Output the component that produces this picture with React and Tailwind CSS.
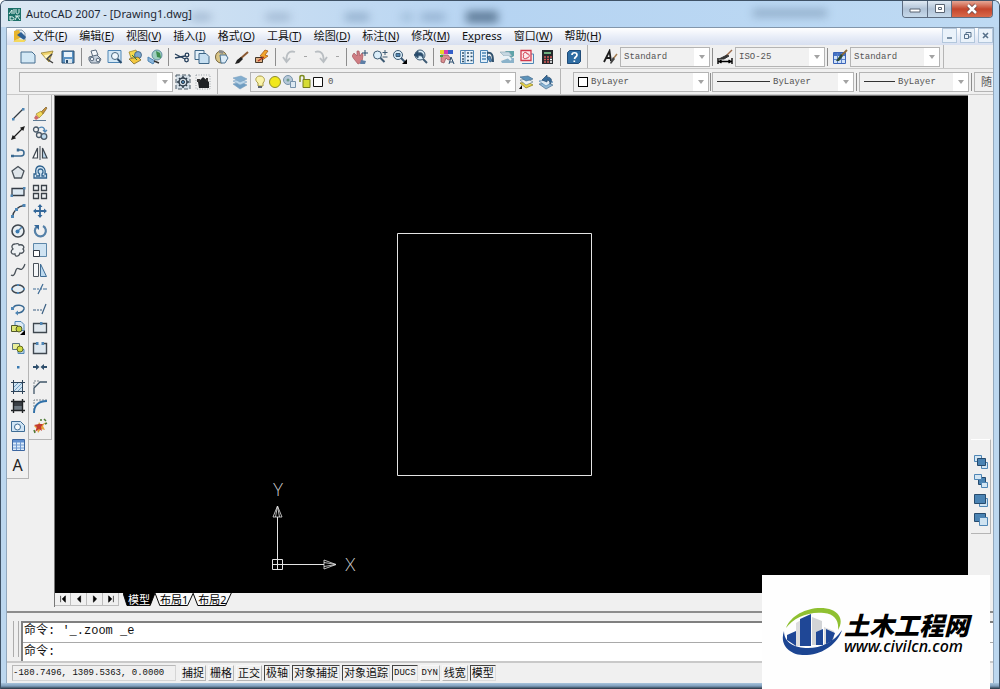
import { useState } from 'react';

const N = '#274b6d';
const B = '#4f86b5';
const L = '#bcd9ee';
const K = '#1d1d1d';

// 16x16 toolbar glyphs
const glyphs = {
    new: <path d="M1 3h11l3 3v8H1z" fill="#d3e8f5" stroke="#476f90" />,
    open: (
        <g>
            <path d="M1 4l12-2-4 11z" fill="#f1d36b" stroke="#8a7420" strokeWidth=".7" />
            <path d="M4 6l8-1-5 6z" fill="#fff6bf" />
            <path d="M12 5l-5 5 6 4" fill="none" stroke="#444" strokeWidth="1.500" />
        </g>
    ),
    save: (
        <g>
            <path d="M2 2h12v12H2z" fill="#5b93c4" stroke={N} />
            <path d="M4 3h8v5H4z" fill="#e8f3fb" />
            <path d="M5 10h7v4H5z" fill="#d9e6ef" />
            <path d="M6 11h2v3H6z" fill={N} />
        </g>
    ),
    print: (
        <g stroke="#5a6a7c">
            <path d="M4 2l5-1 2 5-5 2z" fill="#f5f8fb" />
            <path d="M2 8l8-2 4 4-2 4-8 0-2-3z" fill="#c9d3de" />
            <circle cx="5" cy="10" r="1.8" fill="#eef2f7" />
            <circle cx="11" cy="11" r="1.8" fill="#eef2f7" />
        </g>
    ),
    preview: (
        <g>
            <path d="M1 1.500h13v12H1z" fill="#d4e8f6" stroke={B} />
            <circle cx="8" cy="7" r="3.5" fill="#eef7fd" stroke="#47677f" />
            <path d="M10.500 10l4 4" stroke={N} strokeWidth="2" />
        </g>
    ),
    publish: (
        <g>
            <path d="M2 3l7-2 2 5-7 3z" fill="#f4d84e" stroke="#9c7c1a" strokeWidth=".7" />
            <circle cx="11" cy="6" r="3.500" fill="#7ba6cc" stroke={N} strokeWidth=".7" />
            <path d="M2 10l9-2 3 3-7 4z" fill="#f3c73f" stroke="#6b5a1e" strokeWidth=".7" />
            <path d="M5 6l5 5" stroke="#2f7c3c" />
        </g>
    ),
    globe: (
        <g>
            <circle cx="10" cy="6" r="5" fill="#9fcfc0" stroke="#3a6b8c" strokeWidth=".7" />
            <path d="M9 2l4 2 1 5-4-1z" fill="#3c8c4c" />
            <path d="M1 8l7 4-2 3-5-3z" fill="#8cb7dc" stroke={B} />
            <path d="M7 12l5 2" stroke="#333" strokeWidth="1.500" />
        </g>
    ),
    cut: (
        <g fill="none" stroke="#27405c" strokeWidth="1.300">
            <path d="M1 5l10 5M1 9l10-2" />
            <circle cx="13" cy="6" r="1.800" />
            <circle cx="12.500" cy="11" r="1.800" />
        </g>
    ),
    copy: (
        <g fill="#e3f0f9" stroke="#3f6787">
            <path d="M1 1.500h9v9H1z" />
            <path d="M5 4.500h7l3 3v7H5z" fill="#c6dff1" />
        </g>
    ),
    paste: (
        <g>
            <ellipse cx="7" cy="8" rx="5.500" ry="6" fill="#d9c587" stroke="#76653a" />
            <path d="M5 1l5 1-1 3-4-1z" fill="#8c8c8c" />
            <path d="M6 6h6l2 3-3 5H7z" fill="#dcecf8" stroke="#476f90" />
        </g>
    ),
    brush: (
        <g>
            <path d="M14 3l-8 7" stroke="#8b5a33" strokeWidth="2" />
            <path d="M7 8l2 2-4 4-4 1 2-4z" fill="#222" />
        </g>
    ),
    bolt: (
        <g>
            <path d="M11 1l3 1-3 4 3 1-7 5 2-4-3-1z" fill="#f3a62c" stroke="#a65a18" strokeWidth=".8" />
            <path d="M1.500 8.500h7v5h-7z" fill="#e0b083" stroke="#433629" />
            <path d="M4 12l6-4" stroke="#b03020" strokeWidth="1.300" />
        </g>
    ),
    undo: <path d="M14 3C8 1 5 5 5.500 12M2 8l3.500 5L9 9" fill="none" stroke="#b9bec2" strokeWidth="1.800" />,
    redo: <path d="M2 3c6-2 9 2 8.500 9M7 9l3.500 4L14 8" fill="none" stroke="#b9bec2" strokeWidth="1.800" />,
    pan: (
        <g>
            <path d="M2 4l3 3 0-5 2 0 1 5 2-3 1 2-1 7-4 2-4-5-2-3z" fill="#cf7d83" stroke="#a3575e" strokeWidth=".7" />
            <path d="M13 1v6M10 4h6" stroke={N} />
            <path d="M9 11l5 1-1 3-5 0z" fill="#5d7fa6" />
        </g>
    ),
    zoomrt: (
        <g fill="none" stroke="#3c5a73">
            <circle cx="5.500" cy="6" r="4" fill="#dbeefa" />
            <path d="M8.500 9l4 4" strokeWidth="2" />
            <path d="M13 1v5M10.500 3.500h5M10.500 8h5" />
        </g>
    ),
    zoomwin: (
        <g fill="none" stroke="#3c5a73">
            <circle cx="6" cy="6" r="4.500" fill="#dbeefa" />
            <path d="M4 4.500h4v3H4z" fill={B} />
            <path d="M9 9l4 4" strokeWidth="2" />
            <path d="M15 10v5h-5z" fill="#000" stroke="none" />
        </g>
    ),
    zoomprev: (
        <g fill="none" stroke="#3c5a73">
            <circle cx="8" cy="6" r="5" fill="#dbeefa" />
            <path d="M11 10l4 4" strokeWidth="2" />
            <path d="M2 6l4-4v2c4-1 6 1 5 5-1-2-2-3-5-2v2z" fill={N} />
        </g>
    ),
    props: (
        <g>
            <path d="M1 1h4v4H1z" fill="#e8d52d" />
            <path d="M5 1h4v4H5z" fill="#d33ab0" />
            <path d="M9 1h5v4H9z" fill="#3560c9" />
            <path d="M2 6l7 0 3 4-3 1-2-2-2 5-3-1z" fill="#d98f8f" stroke="#8c4a55" strokeWidth=".7" />
            <path d="M10 15l2-7 3 7m-4-2h3" fill="none" stroke={N} />
            <path d="M1 6h3v2H1z" fill="#39a04b" />
        </g>
    ),
    dcenter: (
        <g>
            <path d="M1.500 1.500h13v13h-13z" fill="#eaf4fb" stroke={B} />
            <path d="M6 2v12" stroke={B} />
            <path d="M3 4h2M3 7h2M3 10h2M3 12.500h2M8 4h2M11.500 4h2M8 7.500h2M11.500 7.500h2M8 11.500h2M11.500 11.500h2" stroke="#33536e" strokeWidth="1.700" />
        </g>
    ),
    palettes: (
        <g>
            <path d="M1.500 1.500h7v12h-7z" fill="#e3f0fa" stroke={B} />
            <path d="M3 4h4M3 7h4M3 10h4" stroke={B} strokeWidth="1.500" />
            <path d="M8 4c5-1 6 2 6 9" fill="none" stroke="#33536e" strokeWidth="2" />
            <path d="M8 8l3 5 2-1-2-5z" fill={B} stroke={N} strokeWidth=".7" />
        </g>
    ),
    sheets: (
        <g>
            <path d="M6 2h9v5l-3 2z" fill="#5fa3a8" />
            <path d="M1 3h9l3 4H5z" fill="#c6d8e2" stroke="#8aa4b4" strokeWidth=".6" />
            <path d="M2 12l8-3h5v5H3z" fill="#8cb3ca" />
            <path d="M1 8h8l3 3" fill="none" stroke="#e9f2f7" strokeWidth="2" />
        </g>
    ),
    markup: (
        <g fill="none">
            <path d="M5 5h9.500v9.500H3" stroke={B} />
            <path d="M2 1.500h10v10H2z" fill="#fbe9eb" stroke="#d2384b" strokeWidth="1.300" />
            <path d="M5 4c1-1 3-1 3 1 3-1 3 4 0 4-3 2-5-1-3-2-1-1-1-2 0-3z" stroke="#d2384b" />
        </g>
    ),
    calc: (
        <g>
            <path d="M3 1h11v14H3z" fill="#26292c" />
            <path d="M5 3h7v2H5z" fill="#6fae7d" />
            <path d="M5 8h2M8 8h2M11 8h2M5 10.500h2M8 10.500h2M5 13h2M8 13h2" stroke="#d85a58" strokeWidth="1.400" />
            <path d="M11 10.500h2M11 13h2" stroke="#fff" strokeWidth="1.400" />
        </g>
    ),
    help: (
        <g>
            <path d="M1.500 3.500l2-2h11v11l-2 2h-11z" fill="#2f6da3" stroke="#1f4b78" />
            <path d="M6 6c0-3 5-3 5 0 0 2-2 1.500-2.500 4M8.300 11.500v1.500" fill="none" stroke="#fff" strokeWidth="1.700" />
        </g>
    ),
    textstyle: (
        <g>
            <path d="M2 13L7.500 2 9 12M4 9h5" fill="none" stroke={K} strokeWidth="1.800" />
            <path d="M15 5l-4 5" stroke="#a37a4e" strokeWidth="1.500" />
            <path d="M11 8l2 2-4 5-1-1z" fill="#444" />
        </g>
    ),
    dimstyle: (
        <g>
            <path d="M15 1L9 7" stroke="#9b6a4a" strokeWidth="1.500" />
            <path d="M10 6l2 1-5 3-5 0z" fill="#333" stroke="#333" />
            <path d="M1 9v6M15 9v6M2 12.500h12M4.500 11L2 12.500 4.500 14M11.500 11l2.500 1.500-2.500 1.500" fill="none" stroke="#000" strokeWidth="1.400" />
        </g>
    ),
    tablestyle: (
        <g>
            <path d="M1.500 3.500h12v11h-12z" fill="#cfe1f8" stroke="#3b64b8" />
            <path d="M2 4h11v3H2z" fill="#4673c4" />
            <path d="M2 10.500h11M5.500 4v10M9.500 4v10" stroke="#5c83c9" />
            <path d="M15 1l-6 6" stroke="#8a6a3a" strokeWidth="1.800" />
            <path d="M9 5l2 2-4 5-3 0z" fill="#2d4a35" />
        </g>
    ),
    gear: (
        <g>
            <path d="M1 1h14v14H1z" fill="#d4dee6" stroke="#4b5a66" strokeDasharray="4 2" />
            <circle cx="8" cy="8" r="4" fill="none" stroke="#2f3e4b" strokeWidth="1.500" />
            <circle cx="8" cy="8" r="1.600" fill="#4f86b5" stroke="#2f3e4b" />
            <path d="M8 2v2M8 12v2M2 8h2M12 8h2M4 4l1 1M11 11l1 1M12 4l-1 1M4 12l1-1" stroke="#2f3e4b" strokeWidth="1.500" />
        </g>
    ),
    workspace: (
        <g>
            <path d="M1 1h14v14H1z" fill="none" stroke="#9aa2a8" strokeDasharray="1 1.500" />
            <path d="M3 8l5-5 6 5v6H4z" fill="#1e2124" />
            <path d="M2 5h3v3H2zM11 4h2v3h-2z" fill="#333" />
        </g>
    ),
    layers: (
        <g stroke="#7ba0c0" strokeWidth=".6">
            <path d="M1 10l8-2 6 3-7 4z" fill="#6f9dc2" />
            <path d="M1 7l8-2 6 3-7 3z" fill="#b9d5e9" />
            <path d="M1 4l8-2 6 3-7 3z" fill="#83aecf" />
        </g>
    ),
    layerprev: (
        <g strokeWidth=".7">
            <path d="M2 9l8-1 5 3-7 3z" fill="#e6d244" stroke="#85781c" />
            <path d="M2 6l8-1 5 3-7 3z" fill="#eff3f4" stroke="#6f8797" />
            <path d="M2 3l8-1 5 3-7 2z" fill="#5d93ba" stroke="#476f90" />
            <path d="M1 15l3-4v4z" fill="#000" />
        </g>
    ),
    layerback: (
        <g strokeWidth=".7">
            <path d="M1 10l8-1 6 2-7 4z" fill="#8fb7d4" stroke="#476f90" />
            <path d="M1 7l8-1 6 2-7 4z" fill="#dfeaf2" stroke={B} />
            <path d="M4 6l5-5v2c4 0 6 3 3 7 0-3-1-4-3-4v2z" fill="#376d9c" stroke={N} />
        </g>
    ),
    line: (
        <g>
            <path d="M3 13L13 3" stroke="#333b44" strokeWidth="1.200" />
            <path d="M2 12h2.500v2.500H2zM12 2h2.500v2.500H12z" fill={B} />
        </g>
    ),
    xline: <path d="M2 14L14 2M2 14l1-3 2 2zM14 2l-3 1 2 2z" fill={K} stroke={K} strokeWidth="1.200" />,
    pline: (
        <g fill="none" stroke="#396890" strokeWidth="1.500">
            <path d="M9 5h2c4 0 4 6 0 6H2" />
            <path d="M8 3.500v3M1 11h3" strokeWidth="2.500" />
        </g>
    ),
    polygon: <path d="M8 2.500l6 4.500-2.500 7h-7L2 7z" fill="#dfe5ea" stroke="#4a525a" strokeWidth="1.300" />,
    rect: (
        <g>
            <path d="M2 4.500h12v7H2z" fill="#dde9f2" stroke="#333b44" strokeWidth="1.300" />
            <path d="M13 3h2.500v2.500H13zM.5 10.500H3V13H.5z" fill={B} />
        </g>
    ),
    arc: (
        <g>
            <path d="M2.500 14C3 8 8 3 14 2.500" fill="none" stroke="#333b44" strokeWidth="1.300" />
            <path d="M1 12h3v3H1zM12.500 1h3v3h-3zM5 5h3v3H5z" fill={B} />
        </g>
    ),
    circle: (
        <g>
            <circle cx="8" cy="8" r="6" fill="#e9eff3" stroke="#3f474f" strokeWidth="1.600" />
            <path d="M8 8l4-4" stroke={B} strokeWidth="1.500" />
            <circle cx="7.500" cy="8.500" r="2" fill="#3879b0" />
        </g>
    ),
    cloud: <path d="M5 2c3-1 4 0 4 1 4-1 6 2 4 4 2 2 0 5-3 4-1 4-5 4-5 1-4 1-5-3-2-5-2-2-1-5 2-5z" fill="#eef1f3" stroke="#4a525a" strokeWidth="1.300" />,
    spline: <path d="M1 13c3 2 4-2 5-5 2-4 4 1 6-1 2-1 2-3 3-5" fill="none" stroke="#4a525a" strokeWidth="1.300" />,
    ellipse: (
        <g>
            <ellipse cx="8" cy="8" rx="6" ry="4" fill="#e5edf2" stroke="#3f474f" strokeWidth="1.500" />
            <path d="M7 3h2v2H7zM7 11h2v2H7zM1 7h2v2H1zM13 7h2v2h-2z" fill={B} />
        </g>
    ),
    ellarc: (
        <g>
            <path d="M3 8c1-6 12-4 11 0-1 3-4 4-7 4" fill="none" stroke="#3a6992" strokeWidth="1.500" />
            <path d="M1 6h3v3H1zM8 9.500v5L5 12z" fill={B} />
        </g>
    ),
    insert: (
        <g>
            <path d="M5 1.500h6l3 3v6H5z" fill="#dceaf4" stroke={B} />
            <path d="M1.500 5.500h6v6h-6z" fill="#dfe878" stroke="#50582a" />
            <circle cx="9" cy="9" r="3" fill="#c5d43d" stroke="#50582a" />
            <path d="M15 10v5h-5z" fill="#000" />
        </g>
    ),
    block: (
        <g>
            <path d="M2.500 3.500h7v6h-7z" fill="#e9ee9a" stroke="#5c7481" />
            <path d="M8 9.500h6v4H8z" fill="#b9d3e6" stroke={B} />
            <circle cx="10" cy="9" r="3" fill="#d2dd45" stroke="#626a1e" />
        </g>
    ),
    point: <path d="M7 7h2.500v2.500H7z" fill="#3879b0" />,
    hatch: (
        <g fill="none">
            <path d="M3 3h10v10H3z" fill="#cfe3f2" />
            <path d="M3 9l6-6M3 13L13 3M7 13l6-6" stroke="#6e9cc0" />
            <path d="M3.500 1v14M12.500 1v14M1 3.500h14M1 12.500h14" stroke="#2d4358" />
        </g>
    ),
    gradient: (
        <g>
            <path d="M4 4h8v8H4z" fill="#6c7780" />
            <path d="M4 4h8v4H4z" fill="#3a3f45" />
            <path d="M3.500 1v14M12.500 1v14M1 3.500h14M1 12.500h14" stroke="#1f2225" strokeWidth="1.400" />
        </g>
    ),
    region: (
        <g>
            <path d="M1.500 3.500h9l4 4v6h-13z" fill="#d0e4f4" stroke="#3e6c95" />
            <circle cx="7.500" cy="9" r="3" fill="#f4f9fc" stroke="#3e6c95" />
        </g>
    ),
    table: (
        <g>
            <path d="M2.500 2.500h12v11h-12z" fill="#dcebfa" stroke="#3c66a0" />
            <path d="M3 3h11v2.500H3z" fill="#5f8fd0" />
            <path d="M3 8h11M3 11h11M6.500 5v8M10.500 5v8" stroke="#6d97cf" />
        </g>
    ),
    erase: (
        <g>
            <path d="M14 1L9 6l2 2 4-6z" fill="#c9953b" stroke="#6a4a1a" strokeWidth=".6" />
            <path d="M4 8l5-3 2 3-4 4z" fill="#f2d757" stroke="#8f7a20" strokeWidth=".6" />
            <path d="M4 9l3 3-3 2-2-2z" fill="#cc6a6a" />
            <path d="M1 14.500h13" stroke="#5c7a95" />
        </g>
    ),
    copyobj: (
        <g fill="none" stroke="#4a5a69" strokeWidth="1.300">
            <circle cx="4" cy="4.500" r="2.500" />
            <circle cx="7" cy="10" r="2.500" />
            <circle cx="12" cy="11.500" r="2.800" fill={L} />
            <path d="M7 3c4-2 6 0 6 4M11 5l2 2 2-2" stroke={B} />
        </g>
    ),
    mirror: (
        <g stroke="#3f474f">
            <path d="M5.500 3v10H1z" fill="#fff" strokeWidth="1.200" />
            <path d="M10.500 3v10H15z" fill={L} strokeWidth="1.200" />
            <path d="M8 1v14" />
        </g>
    ),
    offset: (
        <g fill="none" stroke="#2f628e" strokeWidth="1.300">
            <path d="M2 14h12.500v-4H13c1-4-1-8-5-8S3 6 4 10H2z" fill="#d5e6f2" />
            <path d="M4 12h3.500v-2C5 8 6 5 8.500 5S12 8 10 10v2h2.500" />
        </g>
    ),
    array: <path d="M1.500 1.500h5v5h-5zM9.500 1.500h5v5h-5zM1.500 9.500h5v5h-5zM9.500 9.500h5v5h-5z" fill="#edf0f2" stroke="#3a4148" strokeWidth="1.300" />,
    move: (
        <g fill="#34689a" stroke="#34689a">
            <path d="M8 3v10M3 8h10" strokeWidth="1.800" />
            <path d="M8 1l2.500 3h-5zM8 15l2.500-3h-5zM1 8l3-2.500v5zM15 8l-3-2.500v5z" stroke="none" />
        </g>
    ),
    rotate: (
        <g>
            <path d="M5 3.500a5.500 5.500 0 1 0 6-.5" fill="none" stroke="#5581a8" strokeWidth="2.200" />
            <path d="M2 2h5v5z" fill="#34689a" />
        </g>
    ),
    scale: (
        <g>
            <path d="M1.500 1.500h13v13h-13z" fill="#cfe3f2" stroke="#5d87a9" />
            <path d="M1.500 8.500h6v6h-6z" fill="#fff" stroke="#333b44" />
        </g>
    ),
    stretch: (
        <g>
            <path d="M1.500 1.500h5v13h-5z" fill="#f4f6f8" stroke="#4a525a" />
            <path d="M8.500 2l6 12.500h-6z" fill={L} stroke="#3e6c95" />
        </g>
    ),
    trim: <path d="M1 8h3M5 8h2M9 8h1M11 8h4M6 13l5-10" fill="none" stroke="#3e6c95" strokeWidth="1.200" />,
    extend: <path d="M1 9h3M5 9h2M8 9h2M10 13l4-10" fill="none" stroke="#3b5f82" strokeWidth="1.200" />,
    breakpt: (
        <g>
            <path d="M1.500 3.500h13v9h-13z" fill="#e1e8ee" stroke="#3f474f" strokeWidth="1.300" />
            <path d="M8 2h2.500v3H8z" fill={B} />
        </g>
    ),
    brk: (
        <g>
            <path d="M2 4h12v9H2z" fill="#dde7ef" />
            <path d="M5 3.500H1.500v10h13v-10H11" fill="none" stroke="#3f474f" strokeWidth="1.400" />
            <path d="M4 2h2.500v3H4zM9.500 2H12v3H9.500z" fill={B} />
        </g>
    ),
    join: <path d="M1 7h3V5l3.500 3L4 11V9H1zM15 7h-3V5L8.500 8l3.500 3V9h3z" fill="#2f4f6c" />,
    chamfer: (
        <g fill="none">
            <path d="M2 8V2h6" stroke="#7a848c" strokeDasharray="2 1" />
            <path d="M2 15V9l6-6h7" stroke="#3f5568" strokeWidth="1.300" />
        </g>
    ),
    fillet: (
        <g fill="none">
            <path d="M2 15V2h13" stroke="#7a848c" strokeDasharray="2 1" />
            <path d="M2 15C2 7 7 3 15 3" stroke="#2f70a8" strokeWidth="1.800" />
        </g>
    ),
    explode: (
        <g>
            <path d="M2 8l4-1 1-3 2 3 5-3-3 4 2 4-4-1-3 4-1-4z" fill="#e5a13a" />
            <path d="M2 7l3 2-2 5 4-3 3 2-1-4 2-3-4 0z" fill="#c23a30" />
            <path d="M12 1l2 2M13 6l2-1M9 1v2M2 12l1 3" stroke="#4d7a33" strokeWidth="1.500" />
        </g>
    ),
    front: (
        <g>
            <path d="M1.500 1.500h7v6h-7zM8.500 8.500h6v6h-6z" fill="#d4e6f3" stroke={B} />
            <path d="M4.500 4.500h8v7h-8z" fill="#4a83b3" stroke={N} />
        </g>
    ),
    back: (
        <g>
            <path d="M5.500 4.500h7v7h-7z" fill="#4a83b3" stroke={N} />
            <path d="M1.500 1.500h7v5h-7zM8.500 9.500h6v5h-6z" fill="#d4e6f3" stroke={B} />
        </g>
    ),
    above: (
        <g>
            <path d="M6.500 6.500h8v8h-8z" fill="#cfe3f1" stroke={B} />
            <path d="M1.500 2.500h11v9h-11z" fill="#4a83b3" stroke={N} />
        </g>
    ),
    below: (
        <g>
            <path d="M1.500 2.500h11v8h-11z" fill="#4a83b3" stroke={N} />
            <path d="M6.500 6.500h8v8h-8z" fill="#cfe3f1" stroke={B} />
        </g>
    ),
};

const standardGroups = [
    [['new', 'New'], ['open', 'Open'], ['save', 'Save']],
    [['print', 'Plot'], ['preview', 'Plot preview'], ['publish', 'Publish'], ['globe', '3D DWF']],
    [['cut', 'Cut'], ['copy', 'Copy'], ['paste', 'Paste'], ['brush', 'Match properties'], ['bolt', 'Block editor']],
    [['undo', 'Undo'], ['dash', 'Undo list'], ['redo', 'Redo'], ['dash', 'Redo list']],
    [['pan', 'Pan'], ['zoomrt', 'Zoom realtime'], ['zoomwin', 'Zoom window'], ['zoomprev', 'Zoom previous']],
    [['props', 'Properties'], ['dcenter', 'DesignCenter'], ['palettes', 'Tool palettes'], ['sheets', 'Sheet sets'], ['markup', 'Markup'], ['calc', 'Calculator']],
    [['help', 'Help']],
];

const drawTools = ['line', 'xline', 'pline', 'polygon', 'rect', 'arc', 'circle', 'cloud', 'spline', 'ellipse', 'ellarc', 'insert', 'block', 'point', 'hatch', 'gradient', 'region', 'table', 'text'];
const modifyTools = ['erase', 'copyobj', 'mirror', 'offset', 'array', 'move', 'rotate', 'scale', 'stretch', 'trim', 'extend', 'breakpt', 'brk', 'join', 'chamfer', 'fillet', 'explode'];
const orderTools = ['front', 'back', 'above', 'below'];

const menus = [
    ['文件', 'F'], ['编辑', 'E'], ['视图', 'V'], ['插入', 'I'], ['格式', 'O'], ['工具', 'T'],
    ['绘图', 'D'], ['标注', 'N'], ['修改', 'M'], ['Express', ''], ['窗口', 'W'], ['帮助', 'H'],
];

const statusModes = [
    ['捕捉', false], ['栅格', false], ['正交', false], ['极轴', true], ['对象捕捉', true],
    ['对象追踪', true], ['DUCS', true], ['DYN', false], ['线宽', false], ['模型', true],
];

function Glyph({ name }) {
    return (
        <svg className="w-4 h-4 shrink-0" viewBox="0 0 16 16" aria-hidden="true">
            {glyphs[name]}
        </svg>
    );
}

function Tool({ name, label }) {
    if (name === 'dash') {
        return (
            <button aria-label={label} className="w-3 h-5 flex items-center justify-center">
                <span className="w-[3px] h-px bg-[#a5a5a5]" />
            </button>
        );
    }
    return (
        <button aria-label={label || name} className="w-5 h-[19px] shrink-0 flex items-center justify-center">
            {name === 'text' ? <span className="text-base leading-4 text-[#222]">A</span> : <Glyph name={name} />}
        </button>
    );
}

function Separator() {
    return <span className="w-px h-[18px] mx-[3px] shrink-0 bg-[#8d8d8d]" />;
}

function Combo({ label, value, width, children }) {
    return (
        <div className={`${width} h-5 shrink-0 flex items-center relative border border-[#b4b4b4] bg-[#f1f1f1]`}>
            {children}
            <select
                aria-label={label}
                className="flex-1 min-w-0 h-full appearance-none bg-transparent outline-none pl-[3px] pr-4 pt-[2px] font-['Liberation_Mono','Noto_Sans_CJK_SC',monospace] text-[9px] text-[#555]"
            >
                <option>{value}</option>
            </select>
            <span className="absolute right-0 inset-y-0 w-[15px] bg-white flex items-center justify-center pointer-events-none">
                <svg className="w-[6px] h-[4px]" viewBox="0 0 6 4" aria-hidden="true"><path d="M0 0h6L3 4z" fill="#a3a3a3" /></svg>
            </span>
        </div>
    );
}

function TitleBar() {
    return (
        <header className="relative h-[26px] shrink-0 flex items-center pl-[7px] overflow-hidden bg-linear-to-r from-[#dbe7f2] via-[#b6d4f2] to-[#bedaf3]">
            {/* Shapes of the window behind, seen through the glass */}
            <div aria-hidden="true" className="absolute inset-0 blur-[4px]">
                <span className="absolute left-[190px] top-3 w-5 h-2 bg-[#8aa4bf]/60" />
                <span className="absolute left-[265px] top-3 w-6 h-2 bg-[#8aa4bf]/60" />
                <span className="absolute left-[344px] top-3 w-6 h-2 bg-[#7393b4]/60" />
                <span className="absolute left-[400px] top-3 w-3 h-2 bg-[#7b9aba]/40" />
                <span className="absolute left-[420px] top-3 w-6 h-2 bg-[#7b9aba]/60" />
                <span className="absolute left-[465px] top-[10px] w-8 h-3 bg-[#3f5b78]/70" />
                <span className="absolute left-[752px] top-2 w-[74px] h-2 bg-[#7693af]/60" />
            </div>
            <svg className="relative w-[13px] h-[13px]" viewBox="0 0 13 13" aria-hidden="true">
                <path d="M0 0h13v13H0z" fill="#1c7068" />
                <path d="M1 6l3-4v4m2-5v5m2-5v3c0 3 3 2 3 0V1M2 8v4h3c2-1 1-4-3-3M7 12l2-4 3 4M7 8h5" fill="none" stroke="#e2f4f0" />
            </svg>
            <h1 className="relative ml-[5px] text-[11px] text-[#1d2733]">AutoCAD 2007 - [Drawing1.dwg]</h1>
            <div className="absolute right-[6px] top-0 h-[17px] flex rounded-b border border-t-0 border-[#5d6c80] overflow-hidden">
                <button aria-label="Minimize" className="w-[25px] bg-linear-to-b from-[#dfe9f3] via-[#b1c3d7] to-[#c6d9ea] border-r border-[#5d6c80] flex items-center justify-center">
                    <svg className="w-3 h-3" viewBox="0 0 12 12"><path d="M1 6h10v3H1z" fill="#fff" stroke="#5a6573" /></svg>
                </button>
                <button aria-label="Maximize" className="w-6 bg-linear-to-b from-[#dfe9f3] via-[#b1c3d7] to-[#c6d9ea] border-r border-[#5d6c80] flex items-center justify-center">
                    <svg className="w-3 h-3" viewBox="0 0 12 12"><path d="M1.500 1.500h9v8h-9zM4.500 4.500h3v2h-3z" fill="#fff" stroke="#5a6573" /></svg>
                </button>
                <button aria-label="Close" className="w-10 bg-linear-to-b from-[#e5a796] via-[#c4452c] to-[#d9694a] flex items-center justify-center">
                    <svg className="w-3 h-3" viewBox="0 0 12 12">
                        <path d="M2 2l8 8M10 2l-8 8" stroke="#6b4444" strokeWidth="4" />
                        <path d="M2 2l8 8M10 2l-8 8" stroke="#fff" strokeWidth="2.500" />
                    </svg>
                </button>
            </div>
        </header>
    );
}

function MenuBar() {
    const docButton = 'w-[15px] h-[15px] border border-[#b3c7dc] bg-[#eaf2fa] flex items-center justify-center';
    return (
        <nav className="h-[18px] shrink-0 flex items-start justify-between border-t border-[#8296ab] bg-linear-to-b from-white via-[#e9eef8] to-[#d7dff0]">
            <div className="flex items-center">
                <svg className="w-[14px] h-[14px] ml-[6px] mr-[6px]" viewBox="0 0 14 14" aria-hidden="true">
                    <path d="M3 1h6l3 3v8H3z" fill="#dfeaf4" stroke="#8799aa" />
                    <path d="M1 2l5-1 3 7-8 4z" fill="#e8b52c" />
                    <path d="M4 6l4-3 5 5-2 3z" fill="#2d5f96" />
                    <path d="M0 13l4-3 9 1-2 2z" fill="#f5d95b" />
                </svg>
                <div className="flex gap-3">
                    {menus.map(([text, key]) => (
                        <button key={text} className="text-[11px] leading-[15px] text-[#111] whitespace-nowrap">
                            {key ? <>{text}(<u>{key}</u>)</> : <>E<u>x</u>press</>}
                        </button>
                    ))}
                </div>
            </div>
            <div className="flex gap-[3px]">
                <button aria-label="Minimize drawing" className={docButton}>
                    <svg className="w-[9px] h-[9px]" viewBox="0 0 9 9"><path d="M2 7h5" stroke="#56708a" strokeWidth="1.500" /></svg>
                </button>
                <button aria-label="Restore drawing" className={docButton}>
                    <svg className="w-[9px] h-[9px]" viewBox="0 0 9 9"><path d="M3 3V1.500h5V6H6M1.500 3.500h4v4h-4z" fill="none" stroke="#56708a" /></svg>
                </button>
                <button aria-label="Close drawing" className={docButton}>
                    <svg className="w-[9px] h-[9px]" viewBox="0 0 9 9"><path d="M2 2l5 5M7 2L2 7" stroke="#56708a" strokeWidth="1.600" /></svg>
                </button>
            </div>
        </nav>
    );
}

function Toolbars() {
    const bar = 'flex items-center shrink-0 border-r border-[#b5b5b5]';
    return (
        <div className="shrink-0 bg-[#f0f0f0] overflow-hidden">
            <div className="h-6 flex border-b border-[#c9c9c9]">
                <div className={`${bar} pl-[11px] pr-[3px]`}>
                    {standardGroups.map((group, i) => (
                        <div key={i} className="flex items-center">
                            {i > 0 && <Separator />}
                            {group.map(([name, label]) => <Tool key={label} name={name} label={label} />)}
                        </div>
                    ))}
                </div>
                <div className={`${bar} pl-3 pr-[3px]`}>
                    <Tool name="textstyle" label="Text style" />
                    <Combo label="Text style" value="Standard" width="w-[90px]" />
                    <span className="w-px h-[18px] mx-[2px] bg-[#8d8d8d]" />
                    <Tool name="dimstyle" label="Dimension style" />
                    <Combo label="Dimension style" value="ISO-25" width="w-[90px]" />
                    <span className="w-px h-[18px] mx-[2px] bg-[#8d8d8d]" />
                    <Tool name="tablestyle" label="Table style" />
                    <Combo label="Table style" value="Standard" width="w-[90px]" />
                </div>
            </div>
            <div className="h-[26px] flex border-b border-[#c9c9c9]">
                <div className={`${bar} pl-3 pr-1`}>
                    <Combo label="Workspace" value="" width="w-[154px]" />
                    <Tool name="gear" label="Workspace settings" />
                    <Tool name="workspace" label="My workspace" />
                </div>
                <div className={`${bar} pl-3 pr-1`}>
                    <Tool name="layers" label="Layer properties" />
                    <Combo label="Layer" value="0" width="w-[266px]">
                        <svg className="w-[72px] h-4 ml-[2px] shrink-0" viewBox="0 0 72 16" aria-hidden="true">
                            <path d="M5 9C1 6 3 2 7 2s6 4 3 7v3H5z" fill="#faf3a9" stroke="#a89a44" />
                            <path d="M5 13h4" stroke="#5b6570" strokeWidth="2" />
                            <circle cx="22" cy="8" r="5.500" fill="#f1e81d" stroke="#8c8b2f" />
                            <circle cx="35" cy="6" r="4.500" fill="#b6c8d8" stroke="#7793ab" />
                            <path d="M37.500 7.500h5v6h-5z" fill="#dce8f1" stroke="#7793ab" />
                            <circle cx="35" cy="6" r="1.500" fill="#6c9a8c" />
                            <path d="M47 8V3c0-2 4-2 4 0v5" fill="none" stroke="#7d8b1f" strokeWidth="1.500" />
                            <path d="M50 5.500h7v8h-7z" fill="#d5db35" stroke="#777d1c" />
                            <path d="M60.500 3.500h9v9h-9z" fill="#fff" stroke="#111" />
                        </svg>
                    </Combo>
                    <Tool name="layerprev" label="Make current" />
                    <Tool name="layerback" label="Layer previous" />
                </div>
                <div className="flex-1 min-w-0 flex items-center pl-3">
                    <Combo label="Color" value="ByLayer" width="w-[136px]">
                        <span className="w-[10px] h-[10px] ml-1 shrink-0 border border-black bg-white" />
                    </Combo>
                    <span className="w-px h-[18px] mx-px shrink-0 bg-[#8d8d8d]" />
                    <Combo label="Linetype" value="ByLayer" width="w-[142px]">
                        <span className="w-[53px] h-px ml-1 shrink-0 bg-[#333]" />
                    </Combo>
                    <span className="w-px h-[18px] mx-[2px] shrink-0 bg-[#8d8d8d]" />
                    <Combo label="Lineweight" value="ByLayer" width="w-[110px]">
                        <span className="w-[31px] h-px ml-1 shrink-0 bg-[#333]" />
                    </Combo>
                    <span className="w-px h-[18px] mx-[2px] shrink-0 bg-[#8d8d8d]" />
                    <div className="flex-1 min-w-0 h-5 overflow-hidden border border-r-0 border-[#b4b4b4] pl-[6px] text-[11px] leading-[18px] text-[#555]">随</div>
                </div>
            </div>
        </div>
    );
}

function Canvas() {
    return (
        <svg className="block w-full flex-1 min-h-0 bg-black" fill="none" stroke="#e4e4e4" role="img" aria-label="Model space">
            <path d="M342.500 137.500h194v242h-194z" />
            <path d="M217.500 463.500h10v10h-10zM222.500 421v52M217 468.500h52" />
            <path d="M222.500 410l-4.500 11h9zM222.500 410l-2 11M222.500 410l2 11" strokeWidth=".8" />
            <path d="M281 468.500l-12-4.500v9zM281 468.500l-12-2M281 468.500l-12 2" strokeWidth=".8" />
            <g fill="#d0d0d0" stroke="none" fontFamily="Lato, sans-serif" fontWeight="300" fontSize="17">
                <text x="218" y="400">Y</text>
                <text x="290" y="475">X</text>
            </g>
        </svg>
    );
}

function LayoutTabs() {
    const [tab, setTab] = useState('模型');
    const arrows = [
        ['First', 'M2 1v8M8 1v8L4 5z'],
        ['Previous', 'M7 1v8L3 5z'],
        ['Next', 'M3 1v8l4-4z'],
        ['Last', 'M2 1v8l4-4zM8 1v8'],
    ];
    return (
        <div className="h-[14px] shrink-0 flex items-start bg-[#f0f0f0]">
            {arrows.map(([label, d]) => (
                <button key={label} aria-label={label} className="w-4 h-[13px] border-r border-b border-[#bdbdbd] flex items-center justify-center">
                    <svg className="w-2 h-2" viewBox="0 0 10 10"><path d={d} fill="#000" stroke="#000" strokeWidth=".8" /></svg>
                </button>
            ))}
            <div className="flex ml-1">
                {['模型', '布局1', '布局2'].map((name) => (
                    <button
                        key={name}
                        onClick={() => setTab(name)}
                        className={`relative h-[13px] px-[5px] text-[11px] leading-[13px] ${tab === name ? 'text-white' : 'text-black'}`}
                    >
                        <svg className="absolute inset-0 w-full h-full" viewBox="0 0 40 13" preserveAspectRatio="none" aria-hidden="true">
                            <path d="M0 0l5 12.500h29L40 0" fill={tab === name ? '#000' : '#fafafa'} stroke="#000" />
                        </svg>
                        <span className="relative">{name}</span>
                    </button>
                ))}
            </div>
        </div>
    );
}

function CommandWindow() {
    return (
        <section className="shrink-0 pt-1 bg-[#f0f0f0]">
            <div className="h-[2px] bg-[#8d8d8d]" />
            <div className="flex pt-2 border-b-2 border-[#c9c9c9]">
                <div className="w-[6px] h-9 ml-[6px] mr-[2px] border-x border-[#adadad]" />
                <div className="flex-1 border-t-2 border-l-2 border-[#808080] bg-white font-['Liberation_Mono','Noto_Sans_CJK_SC',monospace] text-xs text-[#111]">
                    <p className="h-[19px] pl-px leading-4 whitespace-pre">命令: '_.zoom _e</p>
                    <label className="h-[19px] pl-px flex items-center border-t border-[#a9a9a9]">
                        命令:
                        <input className="flex-1 min-w-0 h-4 ml-2 outline-none" />
                    </label>
                </div>
            </div>
        </section>
    );
}

function StatusBar() {
    return (
        <footer className="h-[20px] shrink-0 flex items-center pl-[5px] bg-[#f0f0f0] text-[11px] text-[#111]">
            <output className="w-[164px] h-4 mr-1 border border-r-[#d5d5d5] border-b-[#d5d5d5] border-[#b8b8b8] font-['Liberation_Mono',monospace] text-[9px] leading-[15px] whitespace-nowrap">
                -180.7496, 1309.5363, 0.0000
            </output>
            <div className="flex gap-[2px]">
                {statusModes.map(([name, on]) => (
                    <button
                        key={name}
                        aria-pressed={on}
                        className={`h-4 border px-px leading-[14px] whitespace-nowrap ${on ? 'border-t-[#444] border-l-[#444] border-r-[#ddd] border-b-[#ddd]' : 'border-t-[#f7f7f7] border-l-[#f7f7f7] border-r-[#b5b5b5] border-b-[#b5b5b5]'} ${/^[A-Z]/.test(name) ? "font-['Liberation_Mono',monospace] text-[9px]" : ''}`}
                    >
                        {name}
                    </button>
                ))}
            </div>
        </footer>
    );
}

function Watermark() {
    return (
        <a href="#civilcn" className="absolute right-[9px] bottom-0 w-[228px] h-[114px] flex items-center pl-5 bg-[#fefefe]">
            <svg className="w-[62px] h-[50px] shrink-0" viewBox="0 0 62 50" aria-hidden="true">
                <path d="M30 10l10 4v24H30z" fill="#d2d4d6" />
                <path d="M42 20l10 4v8l-10 6z" fill="#dcddde" />
                <path d="M14 16l5-3v26h-5z" fill="#dcddde" />
                <path d="M18 12l11-5v32H18z" fill="#1f4796" />
                <path d="M5 28l9-4v15L5 33z" fill="#1f4796" />
                <path d="M34 25l7-3v16h-7z" fill="#1f4796" />
                <path d="M44 22l9 4-3 8-6 3z" fill="#1f4796" />
                <path d="M4 21C10 5 34-3 50 3c9 4 11 12 6 20 1-9-3-16-14-17C27 4 11 11 4 21z" fill="#8fc031" />
                <path d="M2 24c-5 14 6 25 23 24 17-1 31-12 35-25-8 12-21 18-34 18C13 41 2 36 2 24z" fill="#1c4592" />
            </svg>
            <span className="flex flex-col italic text-black whitespace-nowrap">
                <span className="font-['Noto_Sans_CJK_SC',sans-serif] font-black text-[25px] leading-7">土木工程网</span>
                <span className="font-['Noto_Sans',sans-serif] font-medium text-base leading-4">www.civilcn.com</span>
            </span>
        </a>
    );
}

export default function App() {
    return (
        <div className="relative h-screen flex flex-col overflow-hidden rounded-t-md border border-b-0 border-[#3f5266] bg-[#bcd7ef] font-['Noto_Sans','Noto_Sans_CJK_SC',sans-serif]">
            <TitleBar />
            <div className="flex-1 min-h-0 flex flex-col mx-[5px] border-x border-[#93a9be] bg-[#f0f0f0]">
                <MenuBar />
                <Toolbars />
                <div className="flex-1 min-h-0 flex">
                    <aside className="flex items-start">
                        <div className="w-[22px] h-[384px] pt-[9px] pb-1 flex flex-col items-center justify-between border-r border-b border-[#b5b5b5]">
                            {drawTools.map((name) => <Tool key={name} name={name} />)}
                        </div>
                        <div className="w-[23px] h-[345px] pt-[9px] pb-1 flex flex-col items-center justify-between border-r border-b border-[#b5b5b5]">
                            {modifyTools.map((name) => <Tool key={name} name={name} />)}
                        </div>
                    </aside>
                    <main className="flex-1 min-w-0 ml-[2px] flex flex-col border-l border-t border-[#777]">
                        <Canvas />
                        <LayoutTabs />
                    </main>
                    <aside className="w-[25px] flex flex-col justify-end pb-[73px]">
                        <div className="w-5 ml-[3px] pt-3 pb-[5px] flex flex-col items-center border-t border-t-white border-b border-r border-[#b5b5b5]">
                            {orderTools.map((name) => <Tool key={name} name={name} />)}
                        </div>
                    </aside>
                </div>
                <CommandWindow />
                <StatusBar />
            </div>
            <div className="h-[6px] shrink-0 bg-linear-to-b from-[#a9c4dc] via-[#7f9fbd] to-[#26323f]" />
            <Watermark />
        </div>
    );
}
